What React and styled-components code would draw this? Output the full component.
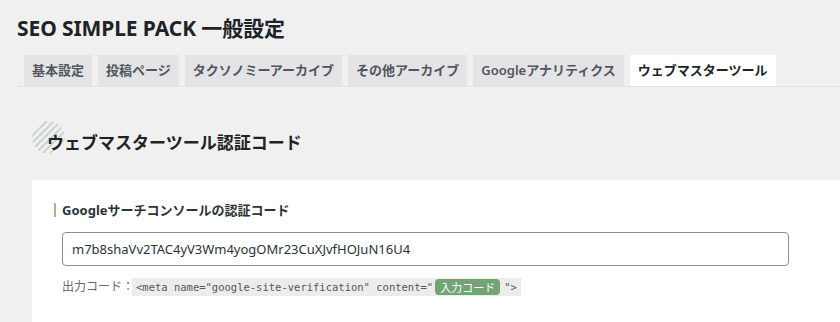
import styled, { createGlobalStyle } from "styled-components";

const GlobalStyle = createGlobalStyle`
  html, body {
    margin: 0;
    padding: 0;
    background: #f0f0f1;
    overflow: hidden;
  }
  body {
    font-family: "Noto Sans", "Noto Sans CJK JP", sans-serif;
    color: #1d2327;
  }
`;

const Wrap = styled.div`
  padding: 10px 0 0 17px;
  height: 312px;
`;

const Title = styled.h1`
  margin: 0;
  font-size: 21px;
  line-height: 36px;
  font-weight: 700;
  color: #1d2327;
  letter-spacing: -0.1px;
`;

const TabNav = styled.nav`
  display: flex;
  gap: 6px;
  margin-top: 9px;
  padding-left: 7px;
  border-bottom: 1px solid #e2e2e4;
`;

const Tab = styled.a`
  display: block;
  padding: 6px 8px;
  font-size: 13px;
  line-height: 19px;
  font-weight: ${(p) => (p.$active ? 700 : 600)};
  color: ${(p) => (p.$active ? "#1d2327" : "#50575e")};
  background: ${(p) => (p.$active ? "#fff" : "#e4e4e6")};
  text-decoration: none;
  white-space: nowrap;
`;

const SectionTitle = styled.h2`
  position: relative;
  margin: 40px 0 21px 15px;
  padding-left: 15px;
  font-size: 17px;
  line-height: 32px;
  font-weight: 700;
  color: #1d2327;
  &::before {
    content: "";
    position: absolute;
    left: 0;
    top: -6px;
    width: 33px;
    height: 33px;
    border-radius: 50%;
    background: repeating-linear-gradient(
      -45deg,
      #cdd8cd 0 2px,
      transparent 2px 5px
    );
  }
  span {
    position: relative;
  }
`;

const Card = styled.section`
  margin-left: 15px;
  background: #fff;
  padding: 23px 0 30px 30px;
`;

const FieldLabel = styled.div`
  margin-left: -8px;
  padding-left: 6px;
  border-left: 2px solid #a3b2a3;
  font-size: 13px;
  line-height: 14px;
  font-weight: 700;
  color: #2c3338;
`;

const TextInput = styled.input`
  display: block;
  margin-top: 15px;
  width: 727px;
  height: 34px;
  box-sizing: border-box;
  padding: 0 9px;
  border: 1px solid #8c8f94;
  border-radius: 4px;
  font-family: "Noto Sans", "Noto Sans CJK JP", sans-serif;
  font-size: 13px;
  color: #2c3338;
  background: #fff;
`;

const OutputRow = styled.p`
  margin: 10px 0 0;
  display: flex;
  align-items: center;
  font-size: 12px;
  line-height: 22px;
  color: #646970;
`;

const Code = styled.code`
  display: inline-flex;
  align-items: center;
  margin-left: -2px;
  padding: 1px 4px;
  background: #ececec;
  font-family: "DejaVu Sans Mono", "Liberation Mono", monospace;
  font-size: 10.5px;
  line-height: 16px;
  color: #50575e;
`;

const Badge = styled.span`
  margin: 0 4px 0 2px;
  padding: 0 5px;
  border-radius: 4px;
  background: #74a474;
  color: #fff;
  font-family: "Noto Sans CJK JP", sans-serif;
  font-size: 11px;
  line-height: 16px;
`;

const tabs = [
  "基本設定",
  "投稿ページ",
  "タクソノミーアーカイブ",
  "その他アーカイブ",
  "Googleアナリティクス",
  "ウェブマスターツール",
];

export default function App() {
  return (
    <>
      <GlobalStyle />
      <Wrap>
        <Title>SEO SIMPLE PACK 一般設定</Title>
        <TabNav>
          {tabs.map((t, i) => (
            <Tab key={t} href="#" $active={i === tabs.length - 1}>
              {t}
            </Tab>
          ))}
        </TabNav>
        <SectionTitle>
          <span>ウェブマスターツール認証コード</span>
        </SectionTitle>
        <Card>
          <FieldLabel>Googleサーチコンソールの認証コード</FieldLabel>
          <TextInput
            type="text"
            defaultValue="m7b8shaVv2TAC4yV3Wm4yogOMr23CuXJvfHOJuN16U4"
          />
          <OutputRow>
            出力コード：
            <Code>
              {'<meta name="google-site-verification" content="'}
              <Badge>入力コード</Badge>
              {'">'}
            </Code>
          </OutputRow>
        </Card>
      </Wrap>
    </>
  );
}
